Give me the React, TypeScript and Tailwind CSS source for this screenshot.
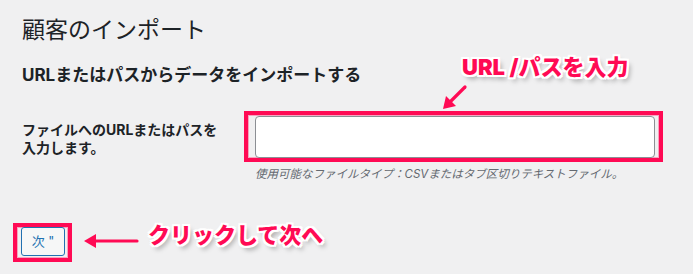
import React from "react";

const outline =
  "[text-shadow:2px_0_0_#fff,-2px_0_0_#fff,0_2px_0_#fff,0_-2px_0_#fff,2px_2px_0_#fff,-2px_-2px_0_#fff,2px_-2px_0_#fff,-2px_2px_0_#fff,3px_4px_5px_rgba(0,0,0,0.35)]";

const Callout: React.FC<{ text: string; className: string }> = ({ text, className }) => (
  <div
    className={`absolute whitespace-nowrap font-black leading-none text-[#ff0a54] ${outline} ${className}`}
  >
    {text}
  </div>
);

export default function App() {
  return (
    <div className="relative min-h-[274px] w-[693px] overflow-hidden bg-[#f0f0f1] px-[22px] pt-[15px] font-['Inter','Noto_Sans_CJK_JP',sans-serif] text-[#1d2327]">
      <h1 className="text-[23px] font-normal leading-[30px]">顧客のインポート</h1>
      <h2 className="mt-[19px] text-[17px] font-bold leading-[23px]">
        URLまたはパスからデータをインポートする
      </h2>

      <div className="mt-[24px] flex items-start">
        <label className="w-[222px] pt-[10px] text-[14px] font-bold leading-[18px]">
          ファイルへのURLまたはパスを
          <br />
          入力します。
        </label>
        <div className="flex flex-col">
          <div className="h-[51px] w-[419px] border-4 border-[#ff0a54] pl-[7px] pt-[1px] shadow-[inset_0_0_0_1px_#f7a3bf]">
            <input
              type="text"
              className="h-[42px] w-[400px] rounded-[4px] border border-[#8c8f94] bg-white px-2 outline-none"
            />
          </div>
          <p className="mt-[4px] pl-[11px] text-[11.5px] italic leading-[16px] text-[#646970]">
            使用可能なファイルタイプ：CSVまたはタブ区切りテキストファイル。
          </p>
        </div>
      </div>

      <div className="-ml-[9px] mt-[41px] h-[39px] w-[59px] border-4 border-[#ff0a54] pl-[4px] shadow-[inset_0_0_0_1px_#f7a3bf]">
        <button className="h-[29px] w-[44px] rounded-[3px] border border-[#2271b1] bg-[#f6f7f7] text-[13px] leading-none text-[#2271b1]">
          次 "
        </button>
      </div>

      <Callout text="URL /パスを入力" className="left-[462px] top-[56px] text-[22px]" />
      <svg className="absolute left-[440px] top-[84px]" width="28" height="28" viewBox="0 0 28 28">
        <line x1="25" y1="3" x2="9" y2="19" stroke="#ff0a54" strokeWidth="3.2" strokeLinecap="round" />
        <polygon points="3,25 6,12 16,22" fill="#ff0a54" />
      </svg>

      <svg className="absolute left-[82px] top-[232px]" width="58" height="18" viewBox="0 0 58 18">
        <line x1="12" y1="9" x2="55" y2="9" stroke="#ff0a54" strokeWidth="3.2" strokeLinecap="round" />
        <polygon points="2,9 14,2 14,16" fill="#ff0a54" />
      </svg>
      <Callout text="クリックして次へ" className="left-[148px] top-[224px] text-[22px]" />
    </div>
  );
}
